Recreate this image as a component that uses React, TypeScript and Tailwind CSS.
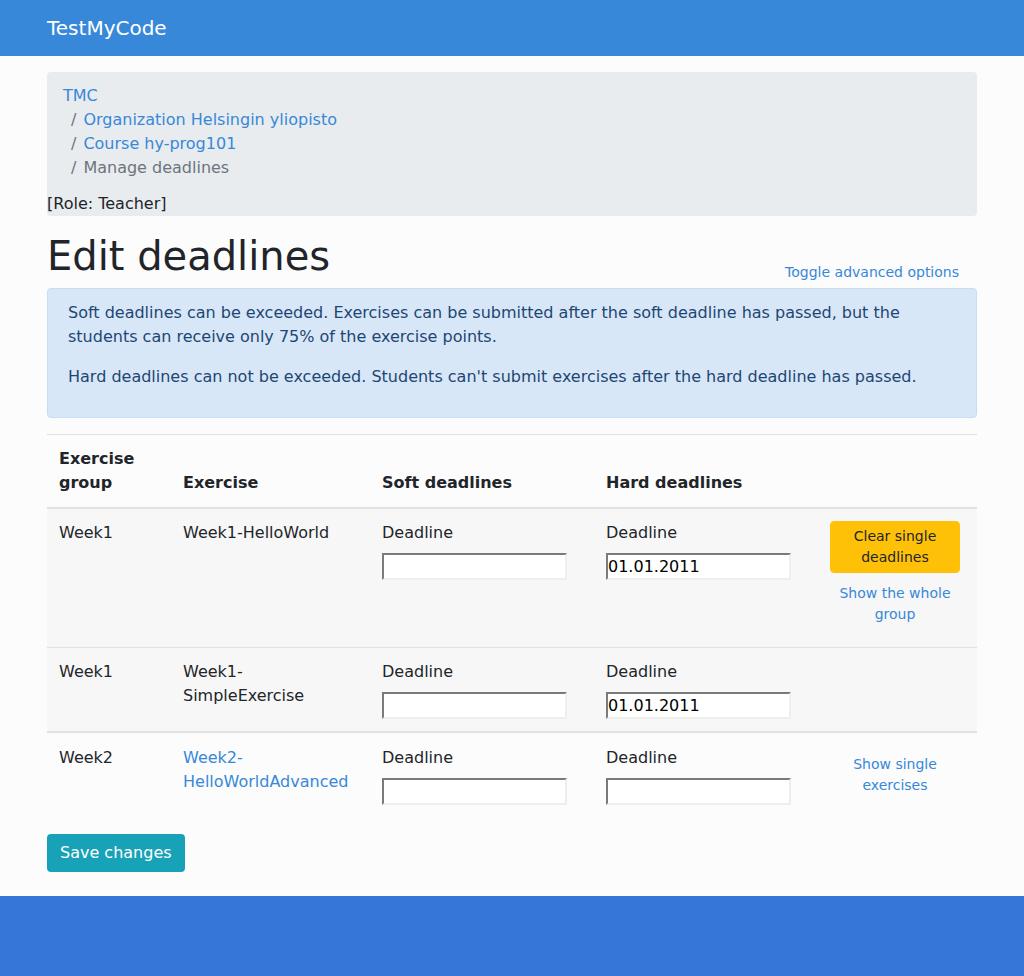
import React from "react";

type Row = {
  group: string;
  exercise: string;
  exerciseLink?: boolean;
  hard: string;
  striped: boolean;
  action?: "clear" | "single";
};

const rows: Row[][] = [
  [
    { group: "Week1", exercise: "Week1-HelloWorld", hard: "01.01.2011", striped: true, action: "clear" },
    { group: "Week1", exercise: "Week1-SimpleExercise", hard: "01.01.2011", striped: true },
  ],
  [{ group: "Week2", exercise: "Week2-HelloWorldAdvanced", exerciseLink: true, hard: "", striped: false, action: "single" }],
];

function DeadlineInput({ value }: { value: string }) {
  return (
    <input
      type="text"
      defaultValue={value}
      className="mt-2 block h-[27px] w-[185px] border-2 border-t-[#7a7a7a] border-l-[#7a7a7a] border-b-[#efefe9] border-r-[#efefe9] bg-white px-0 text-[16px] text-black outline-none"
    />
  );
}

function DeadlineCell({ value, top }: { value: string; top: string }) {
  return (
    <td className={top + " px-3 pb-3 align-top"}>
      <label className="block">Deadline</label>
      <DeadlineInput value={value} />
    </td>
  );
}

export default function App() {
  return (
    <div className="flex min-h-[976px] flex-col bg-[#fcfcfc] font-['DejaVu_Sans',sans-serif] text-[16px] leading-6 text-[#212529]">
      {/* top bar */}
      <nav className="flex h-14 items-center bg-[#3788d8] px-[47px]">
        <span className="text-[20px] leading-[30px] text-white">TestMyCode</span>
      </nav>

      <main className="mx-auto w-[930px] flex-1 pt-4 pb-6">
        {/* breadcrumb */}
        <div className="mb-4 rounded bg-[#e9ecef]">
          <ol className="px-4 pt-3 pb-3">
            <li>
              <a className="text-[#3788d8]">TMC</a>
            </li>
            <li className="pl-2">
              <span className="pr-[7px] text-[#6c757d]">/</span>
              <a className="text-[#3788d8]">Organization Helsingin yliopisto</a>
            </li>
            <li className="pl-2">
              <span className="pr-[7px] text-[#6c757d]">/</span>
              <a className="text-[#3788d8]">Course hy-prog101</a>
            </li>
            <li className="pl-2 text-[#6c757d]">
              <span className="pr-[7px]">/</span>
              Manage deadlines
            </li>
          </ol>
          <div>[Role: Teacher]</div>
        </div>

        <div className="flex items-end justify-between">
          <h1 className="mb-2 text-[40px] leading-[48px] font-medium">Edit deadlines</h1>
          <button className="mr-[10px] mb-px px-2 py-1 text-[14px] leading-[21px] text-[#3788d8]">
            Toggle advanced options
          </button>
        </div>

        {/* info */}
        <div className="mb-4 rounded border border-[#c8ddf5] bg-[#d8e7f8] px-5 py-3 text-[#1d4672]">
          <p className="mb-4">
            Soft deadlines can be exceeded. Exercises can be submitted after the soft deadline has passed, but the
            students can receive only 75% of the exercise points.
          </p>
          <p className="mb-4">
            Hard deadlines can not be exceeded. Students can't submit exercises after the hard deadline has passed.
          </p>
        </div>

        <table className="mb-[17px] w-full table-fixed border-collapse">
          <colgroup>
            <col className="w-[124px]" />
            <col className="w-[199px]" />
            <col className="w-[224px]" />
            <col className="w-[224px]" />
            <col className="w-[159px]" />
          </colgroup>
          <thead>
            <tr className="border-t border-b-2 border-[#dee2e6] text-left align-bottom">
              <th className="p-3 font-bold">Exercise group</th>
              <th className="p-3 font-bold">Exercise</th>
              <th className="p-3 font-bold">Soft deadlines</th>
              <th className="p-3 font-bold">Hard deadlines</th>
              <th className="p-3"></th>
            </tr>
          </thead>
          {rows.map((body, bi) => (
            <tbody key={bi} className={bi > 0 ? "border-t-2 border-[#dee2e6]" : ""}>
              {body.map((r, ri) => {
                const top = bi > 0 ? "pt-[13px]" : "pt-3";
                return (
                  <tr
                    key={ri}
                    className={(r.striped ? "bg-[#f7f7f7] " : "") + (ri > 0 ? "border-t border-[#dee2e6]" : "")}
                  >
                    <td className={top + " px-3 pb-3 align-top"}>{r.group}</td>
                    <td className={top + " px-3 pb-3 align-top"}>
                      {r.exerciseLink ? (
                        <a className="text-[#3788d8]">
                          Week2-
                          <br />
                          HelloWorldAdvanced
                        </a>
                      ) : r.exercise === "Week1-SimpleExercise" ? (
                        <>
                          Week1-
                          <br />
                          SimpleExercise
                        </>
                      ) : (
                        r.exercise
                      )}
                    </td>
                    <DeadlineCell value="" top={top} />
                    <DeadlineCell value={r.hard} top={top} />
                    <td className={top + " px-3 pb-3 align-top text-[14px] leading-[21px]"}>
                      {r.action === "clear" && (
                        <>
                          <button className="w-[130px] rounded border border-[#ffc107] bg-[#ffc107] px-2 py-1 text-center text-[#212529]">
                            Clear single deadlines
                          </button>
                          <a className="mt-[10px] mb-[10px] block w-[130px] text-center text-[#3788d8]">
                            Show the whole group
                          </a>
                        </>
                      )}
                      {r.action === "single" && (
                        <a className="mt-2 block w-[130px] text-center text-[#3788d8]">Show single exercises</a>
                      )}
                    </td>
                  </tr>
                );
              })}
            </tbody>
          ))}
        </table>

        <button className="rounded bg-[#17a2b8] px-[13px] py-[7px] text-white">Save changes</button>
      </main>

      <footer className="h-20 bg-[#3676d8]"></footer>
    </div>
  );
}
